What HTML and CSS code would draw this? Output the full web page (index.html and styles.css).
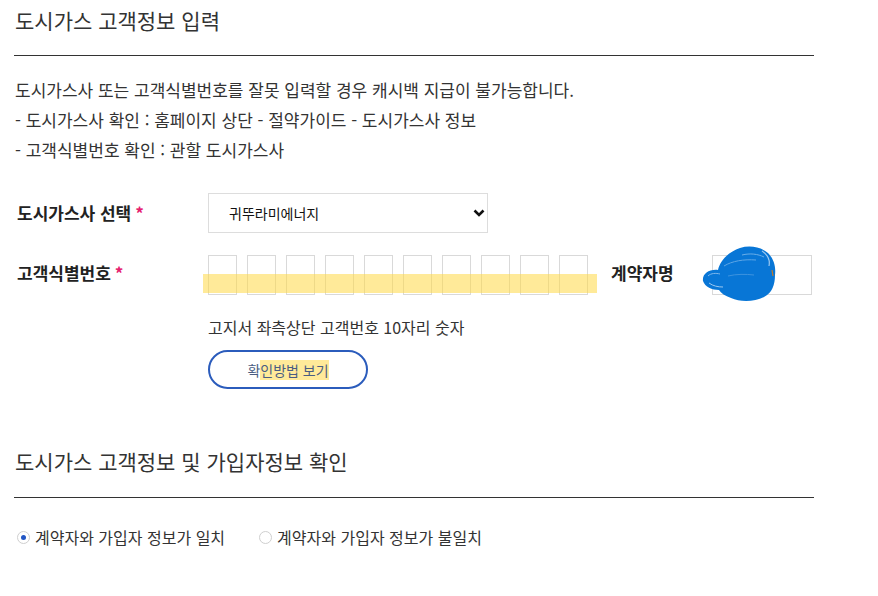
FILE: index.html
```html
<!DOCTYPE html>
<html lang="ko">
<head>
<meta charset="utf-8">
<title>도시가스 고객정보 입력</title>
<link rel="stylesheet" href="styles.css">
</head>
<body>
<div class="wrap">
  <h2 class="title">도시가스 고객정보 입력</h2>
  <p class="notice">도시가스사 또는 고객식별번호를 잘못 입력할 경우 캐시백 지급이 불가능합니다.<br>- 도시가스사 확인 : 홈페이지 상단 - 절약가이드 - 도시가스사 정보<br>- 고객식별번호 확인 : 관할 도시가스사</p>

  <div class="row row-select">
    <div class="label">도시가스사 선택<span class="req">*</span></div>
    <div class="select-wrap">
      <select class="select">
        <option>귀뚜라미에너지</option>
      </select>
      <svg class="chev" width="12" height="8" viewBox="0 0 12 8"><polyline points="1.5,1.5 6,6 10.5,1.5" fill="none" stroke="#111" stroke-width="2.6"/></svg>
    </div>
  </div>

  <div class="row row-num">
    <div class="label">고객식별번호<span class="req">*</span></div>
    <div class="digits">
      <input class="digit" type="text"><input class="digit" type="text"><input class="digit" type="text"><input class="digit" type="text"><input class="digit" type="text"><input class="digit" type="text"><input class="digit" type="text"><input class="digit" type="text"><input class="digit" type="text"><input class="digit" type="text">
      <span class="mark mark-digits"></span>
    </div>
    <div class="label label-name">계약자명</div>
    <div class="name-wrap">
      <input class="name" type="text">
      <svg class="scribble" width="82" height="60" viewBox="0 0 82 60">
        <path d="M16 26 C18 17 26 8 38 4 C48 1 59 3 66 9 C72 15 74 23 73 31 C73 41 70 49 62 53 C52 58 38 58 29 54 C23 52 19 49 17 46 C10 46 3 43 1 37 C0 30 7 25 16 26 Z" fill="#0876d6"/>
        <path d="M6 32 C9 29 14 29 18 30" fill="none" stroke="#7fb8ec" stroke-width="1"/>
        <path d="M7 39 C11 42 16 43 21 43" fill="none" stroke="#9cc8f0" stroke-width="1"/>
        <path d="M22 22 C30 17 42 15 54 16" fill="none" stroke="#5ea6e6" stroke-width="1"/>
        <path d="M40 11 C48 9 56 10 62 13" fill="none" stroke="#6aaee8" stroke-width="1"/>
        <path d="M60 7 C66 11 68 17 67 22" fill="none" stroke="#9cc8f0" stroke-width="1.2"/>
        <path d="M26 32 C34 30 44 30 52 31" fill="none" stroke="#3d93df" stroke-width="1"/>
        <path d="M70 26 L71 32" stroke="#c27a2a" stroke-width="1.2"/>
      </svg>
    </div>
  </div>

  <div class="under">
    <p class="hint">고지서 좌측상단 고객번호 10자리 숫자</p>
    <button class="btn" type="button"><span class="btn-text">확<span class="mark-text">인방법 보기</span></span></button>
  </div>

  <h2 class="title title-2">도시가스 고객정보 및 가입자정보 확인</h2>

  <div class="radios">
    <label class="radio"><input type="radio" name="match" checked><span>계약자와 가입자 정보가 일치</span></label>
    <label class="radio"><input type="radio" name="match"><span>계약자와 가입자 정보가 불일치</span></label>
  </div>
</div>
</body>
</html>
```

FILE: styles.css
```css
* { box-sizing: border-box; }
html, body { margin: 0; padding: 0; background: #fff; }
body {
  font-family: "Noto Sans CJK KR", "Noto Sans", sans-serif;
  color: #333;
}
.wrap {
  width: 828px;
  padding: 0 14px;
}
.title {
  margin: 0;
  font-size: 21px;
  font-weight: 400;
  line-height: 40px;
  padding: 0 0 15px 1px;
  border-bottom: 1px solid #333;
  color: #333;
}
.title-2 {
  margin-top: 52px;
  padding-bottom: 16px;
}
.notice {
  margin: 19px 0 0 1px;
  font-size: 17px;
  line-height: 30px;
  color: #333;
}
.row {
  display: flex;
  align-items: center;
}
.row-select { margin-top: 28px; }
.row-num { margin-top: 22px; }
.label {
  width: 194px;
  padding-left: 3px;
  font-size: 17px;
  font-weight: 700;
  color: #222;
  line-height: 20px;
}
.row-num .label { margin-top: -4px; }
.req {
  color: #e5206e;
  margin-left: 4px;
  font-weight: 700;
}
.select-wrap {
  position: relative;
  width: 280px;
  height: 40px;
}
.select {
  appearance: none;
  -webkit-appearance: none;
  width: 100%;
  height: 100%;
  border: 1px solid #ddd;
  border-radius: 0;
  background: #fff;
  padding: 0 0 0 20px;
  font-family: "Noto Sans CJK KR", sans-serif;
  font-size: 14px;
  color: #111;
  outline: none;
}
.chev {
  position: absolute;
  right: 3px;
  top: 16px;
  pointer-events: none;
}
.digits {
  position: relative;
  display: flex;
  gap: 10px;
  width: 380px;
}
.digit {
  width: 29px;
  height: 40px;
  border: 1px solid #d9d9d9;
  border-radius: 0;
  padding: 0;
  margin: 0;
  background: #fff;
  outline: none;
}
.mark {
  position: absolute;
  background: rgba(255, 216, 70, 0.55);
  pointer-events: none;
}
.mark-digits {
  left: -5px;
  top: 19px;
  width: 394px;
  height: 19px;
}
.label-name {
  width: 101px;
  margin-left: 23px;
  padding-left: 0;
  color: #222;
}
.name-wrap {
  position: relative;
  width: 100px;
  height: 40px;
}
.name {
  width: 100px;
  height: 40px;
  border: 1px solid #d9d9d9;
  border-radius: 0;
  padding: 0;
  background: #fff;
  outline: none;
}
.scribble {
  position: absolute;
  left: -10px;
  top: -11px;
}
.under {
  padding-left: 194px;
}
.hint {
  margin: 22px 0 0;
  font-size: 16px;
  line-height: 20px;
  color: #333;
}
.btn {
  display: flex;
  align-items: center;
  justify-content: center;
  margin-top: 13px;
  width: 160px;
  height: 39px;
  border: 2px solid #2b5cbc;
  border-radius: 20px;
  background: #fff;
  padding: 0;
  font-family: "Noto Sans CJK KR", sans-serif;
  font-size: 14px;
  color: #4a5d82;
}
.btn-text { line-height: 20px; }
.mark-text {
  background: rgba(255, 216, 70, 0.55);
}
.radios {
  display: flex;
  gap: 34px;
  margin-top: 29px;
  padding-left: 3px;
}
.radio {
  display: flex;
  align-items: center;
  gap: 5px;
  font-size: 16px;
  line-height: 20px;
  color: #333;
}
.radio input {
  appearance: none;
  -webkit-appearance: none;
  width: 13px;
  height: 13px;
  margin: 0;
  border: 1px solid #cfcfcf;
  border-radius: 50%;
  background: #fff;
  position: relative;
}
.radio input:checked::after {
  content: "";
  position: absolute;
  left: 3px;
  top: 3px;
  width: 5px;
  height: 5px;
  border-radius: 50%;
  background: #2256c4;
}
```
